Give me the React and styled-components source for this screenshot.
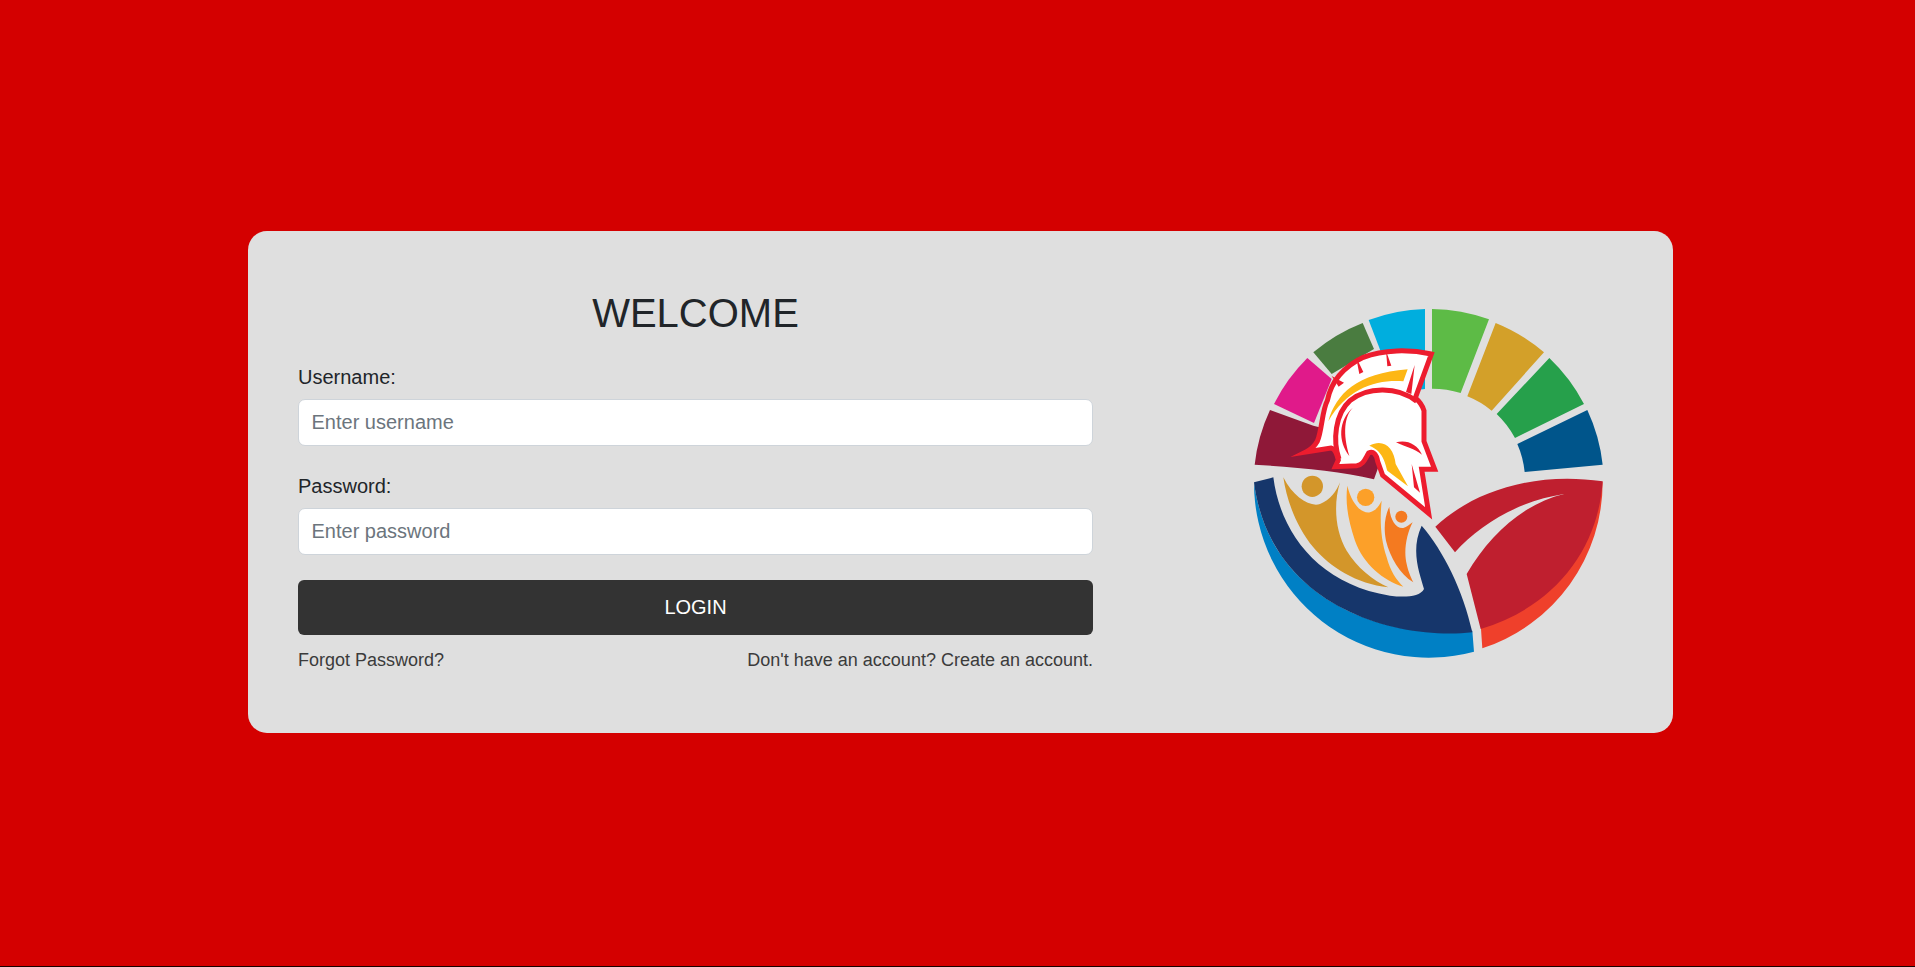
import React from 'react';
import styled, { createGlobalStyle } from 'styled-components';

const GlobalStyle = createGlobalStyle`
    html {
        background: #1a0000;
    }
    body {
        margin: 0;
        font-family: "Liberation Sans", Arial, sans-serif;
    }
`;

const Page = styled.div`
    height: 966px;
    box-sizing: border-box;
    padding: 0 0 2px 6px;
    display: flex;
    align-items: center;
    justify-content: center;
    background-color: #d40000;
`;

const Card = styled.div`
    width: 1425px;
    height: 502px;
    display: flex;
    align-items: stretch;
    background-color: #dfdfdf;
    border-radius: 19px;
`;

const FormPanel = styled.form`
    width: 795px;
    margin-left: 50px;
    padding-top: 57.5px;
    flex-shrink: 0;
`;

const Title = styled.h2`
    margin: 0 0 25px;
    font-size: 40px;
    font-weight: 400;
    line-height: 48px;
    text-align: center;
    color: #212529;
`;

const Field = styled.div`
    margin-bottom: ${(props) => props.$gap}px;
`;

const Label = styled.label`
    display: block;
    margin-bottom: 7px;
    font-size: 20px;
    line-height: 30px;
    color: #212529;
`;

const Input = styled.input`
    display: block;
    width: 100%;
    height: 47.5px;
    box-sizing: border-box;
    padding: 7.5px 12.5px;
    font-family: inherit;
    font-size: 20px;
    line-height: 30px;
    color: #495057;
    background: #fff;
    border: 1.25px solid #ced4da;
    border-radius: 7px;
    outline: none;

    &::placeholder {
        color: #6c757d;
        opacity: 1;
    }
`;

const LoginButton = styled.button`
    display: block;
    width: 100%;
    height: 55px;
    padding: 0;
    font-family: inherit;
    font-size: 20px;
    color: #fff;
    background-color: #333;
    border: none;
    border-radius: 6px;
`;

const LinkRow = styled.div`
    display: flex;
    justify-content: space-between;
    margin-top: 12px;
`;

const TextLink = styled.a`
    font-size: 18px;
    line-height: 26.25px;
    color: #3b3b3b;
    text-decoration: none;
`;

const LogoPanel = styled.div`
    flex: 1;
    display: flex;
    align-items: center;
    justify-content: center;
    padding: 3px 0 0 92px;
`;

const LogoSvg = styled.svg`
    width: 349.33px;
    height: 349.33px;
    display: block;
`;

const Logo = () => (
    <LogoSvg viewBox="72 55 1048 1048" role="img" aria-label="Logo">
        {/* ring segments */}
        <path fill="#8f1838" d="M120 358A524 524 0 0 0 74 522C200 530 330 540 432 566L470 460 250 405Z" />
        <path fill="#e01a8a" d="M232 202A524 524 0 0 0 132 340L252 397 305 265Z" />
        <path fill="#4a7c40" d="M398 97A524 524 0 0 0 250 185L305 250 432 175Z" />
        <path fill="#00aede" d="M585 55A524 524 0 0 0 416 88L455 190 540 300 585 295Z" />
        <path fill="#5dbb46" d="M606 55A524 524 0 0 1 777 86L692 307A285 285 0 0 0 606 294Z" />
        <path fill="#d3a029" d="M797 97A524 524 0 0 1 942 185L785 360A285 285 0 0 0 712 317Z" />
        <path fill="#26a04b" d="M958 202A524 524 0 0 1 1062 340L855 442A285 285 0 0 0 800 370Z" />
        <path fill="#00558b" d="M1072 358A524 524 0 0 1 1118 522L884 544A285 285 0 0 0 862 460Z" />

        {/* leaf */}
        <path fill="#ef402b" d="M1118 572A524 524 0 0 1 757 1073L752 1000 1000 800Z" />
        <path fill="#bf1f2f" d="M616 708C720 610 900 540 1118 572C1104 780 970 950 752 1015L710 850C780 730 880 640 1002 610C870 630 750 700 675 785Z" />

        {/* hand */}
        <path fill="#0080c5" d="M72 575A524 524 0 0 0 732 1083L727 1020C500 1050 120 950 72 575Z" />
        <path fill="#16366b" d="M72 575L130 560C150 720 260 880 480 915C520 920 570 920 582 895C570 850 540 780 575 705C640 780 700 900 727 1025C500 1050 120 950 72 575Z" />

        {/* people */}
        <circle fill="#d3962a" cx="247" cy="587" r="32" />
        <path fill="#d3962a" d="M160 560C190 620 240 650 270 640C300 630 320 600 330 575C310 640 315 720 350 780C380 830 430 870 475 890C380 880 300 830 250 770C200 710 170 630 160 560Z" />
        <circle fill="#fca029" cx="407" cy="620" r="26" />
        <path fill="#fca029" d="M352 585C365 640 395 670 420 665C440 660 450 640 455 630C450 680 450 740 470 800C480 840 500 870 520 888C460 870 400 820 375 750C355 690 345 640 352 585Z" />
        <circle fill="#f47a20" cx="514" cy="678" r="18" />
        <path fill="#f47a20" d="M478 648C480 690 500 715 520 712C530 710 540 700 548 695C530 730 520 780 530 820C535 845 545 865 550 875C510 850 480 800 468 750C460 710 465 675 478 648Z" />

        {/* helmet */}
        <g transform="translate(120 120)">
            <path
                fill="#fff"
                stroke="#ed1c2e"
                strokeWidth="15"
                strokeLinejoin="miter"
                strokeMiterlimit="12"
                d="M484 70C420 56 340 56 280 80C222 108 184 150 172 210C156 240 156 300 142 332C132 350 120 358 108 364L183 352C196 354 202 375 205 388L196 408 260 405C280 403 285 385 296 367C310 360 320 372 323 392L338 434 476 548 455 416 494 416 462 332V240C458 226 448 212 436 202Z"
            />
            <path fill="none" stroke="#ed1c2e" strokeWidth="15" d="M207 385C188 330 195 250 240 210C290 170 380 165 440 212" />
            <path fill="#ed1c2e" d="M185 136L222 156 206 168ZM258 78L280 124 268 130ZM348 60L364 105 352 107ZM434 103L424 190 408 184Z" />
            <path fill="#ed1c2e" d="M250 230C222 256 218 310 238 376C204 334 204 268 250 230ZM378 335C410 326 442 340 456 372C432 354 410 350 378 335ZM425 400L450 486 432 470Z" />
            <path fill="#fdb714" d="M175 272C198 190 260 128 413 116L400 152C320 146 232 172 175 272Z" />
            <path fill="#fdb714" d="M298 345C340 322 372 350 377 400L414 467L352 420C345 395 338 360 298 345Z" />
        </g>
    </LogoSvg>
);

const App = () => (
    <Page>
        <GlobalStyle />
        <Card>
            <FormPanel>
                <Title>WELCOME</Title>
                <Field $gap={24.5}>
                    <Label htmlFor="username">Username:</Label>
                    <Input id="username" type="text" placeholder="Enter username" />
                </Field>
                <Field $gap={25}>
                    <Label htmlFor="password">Password:</Label>
                    <Input id="password" type="password" placeholder="Enter password" />
                </Field>
                <LoginButton type="button">LOGIN</LoginButton>
                <LinkRow>
                    <TextLink href="#">Forgot Password?</TextLink>
                    <TextLink href="#">Don't have an account? Create an account.</TextLink>
                </LinkRow>
            </FormPanel>
            <LogoPanel>
                <Logo />
            </LogoPanel>
        </Card>
    </Page>
);

export default App;
